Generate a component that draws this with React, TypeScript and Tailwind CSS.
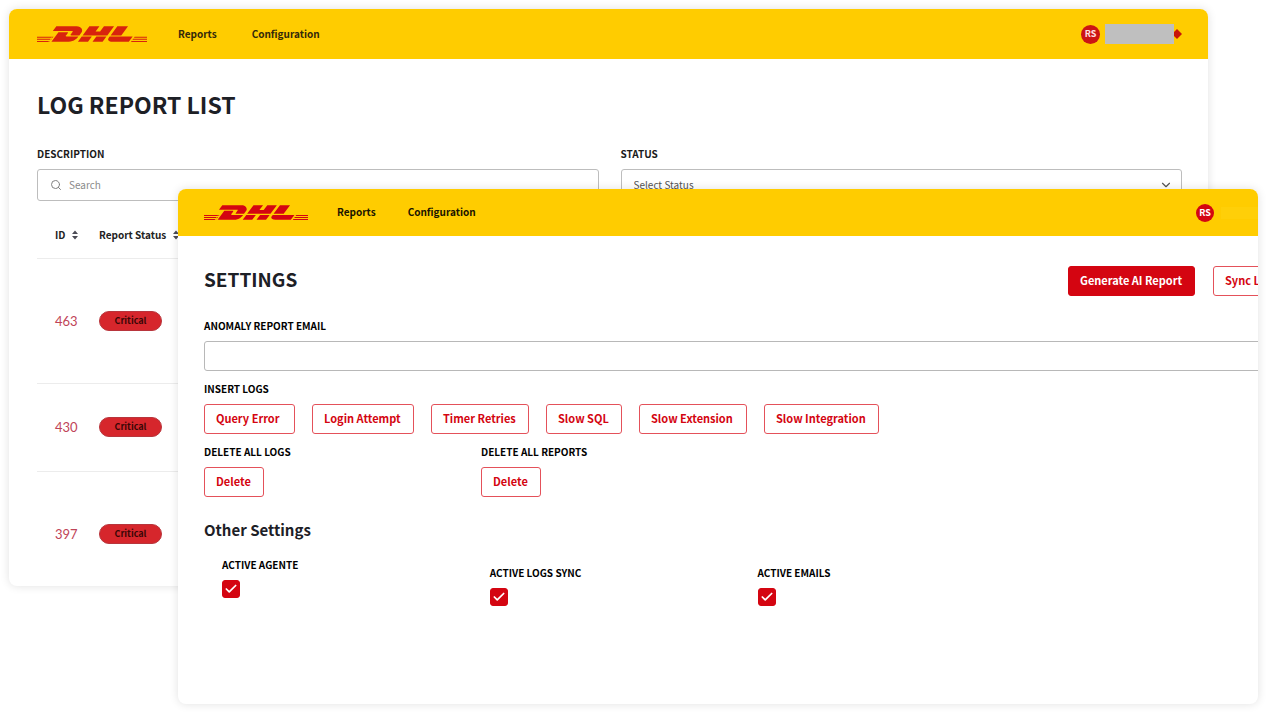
import { useState } from 'react';
import type { ReactNode } from 'react';
import { Check, ChevronDown, Search } from 'lucide-react';
import { SiDhl } from 'react-icons/si';

type ActionButtonProps = {
  children: ReactNode;
  filled?: boolean;
  className?: string;
};

type ToggleFieldProps = {
  id: string;
  label: string;
  className?: string;
};

const insertLogs = [
  { label: 'Query Error', width: 'w-[91px]' },
  { label: 'Login Attempt', width: 'w-[102px]' },
  { label: 'Timer Retries', width: 'w-[98px]' },
  { label: 'Slow SQL', width: 'w-[76px]' },
  { label: 'Slow Extension', width: 'w-[108px]' },
  { label: 'Slow Integration', width: 'w-[115px]' },
];

const reports = [
  { id: 463, status: 'Critical', height: 'h-[125px]' },
  { id: 430, status: 'Critical', height: 'h-[88px]' },
  { id: 397, status: 'Critical', height: 'h-[125px]' },
];

// the icon's own stripes vanish at this size, so heavier ones go over them
const Logo = ({ className }: { className: string }) => (
  <svg viewBox="0 0 104 15" className={className} role="img" aria-label="DHL">
    <SiDhl size={104} y={-44.5} />
    <path d="M0 9.5h15l-3.5 5.5H0zM104 9.5H92l-4 5.5h16z" fill="#ffcc00" />
    <path
      d="M0 10h14.2l-.7 1H0zM0 12h12.8l-.7 1H0zM0 14h11.4l-.7 1H0zM104 10H92.3l-.7 1H104zM104 12H90.9l-.7 1H104zM104 14H89.5l-.7 1H104z"
      fill="currentColor"
    />
  </svg>
);

const ActionButton = ({ children, filled, className }: ActionButtonProps) => (
  <button
    type="button"
    className={`h-[30px] shrink-0 rounded-[3px] border pb-[2px] pl-[11px] text-left text-[11px] leading-4 font-bold whitespace-nowrap ${
      filled
        ? 'border-[#d40511] bg-[#d40511] text-white'
        : 'border-[#e4515a] bg-white text-[#d40511]'
    } ${className ?? ''}`}
  >
    {children}
  </button>
);

const SortIcon = () => (
  <svg viewBox="0 0 8 10" className="h-[10px] w-2 shrink-0" fill="#4b4b55">
    <path d="M4 0.5 7 4H1zM4 9.5 1 6h6z" />
  </svg>
);

const ToggleField = ({ id, label, className }: ToggleFieldProps) => {
  const [checked, setChecked] = useState(true);

  return (
    <div className={className}>
      <label
        htmlFor={id}
        className="block text-[10px] leading-4 font-bold text-black"
      >
        {label}
      </label>
      <div className="mt-[7px] grid w-[18px]">
        <input
          id={id}
          type="checkbox"
          checked={checked}
          onChange={(e) => setChecked(e.target.checked)}
          className="col-start-1 row-start-1 size-[18px] appearance-none rounded-[3px] border border-[#d40511] checked:bg-[#d40511]"
        />
        {checked && (
          <Check
            className="pointer-events-none col-start-1 row-start-1 size-[14px] place-self-center text-white"
            strokeWidth={3}
          />
        )}
      </div>
    </div>
  );
};

const ReportListWindow = () => (
  <section className="col-start-1 row-start-1 mr-[50px] mb-[118px] h-0 min-h-[calc(100%-118px)] overflow-hidden rounded-lg bg-white shadow-[0_0_10px_rgba(0,0,0,0.12)]">
    <header className="flex h-[50px] items-center bg-[#ffcc00] pr-[26px] pl-7">
      <Logo className="h-4 w-[110px] text-[#d8230d]" />
      <nav className="ml-[31px] flex gap-[35px] text-[10px] leading-4 font-bold text-[#33290a]">
        <a href="#reports">Reports</a>
        <a href="#configuration">Configuration</a>
      </nav>
      <div className="ml-auto flex items-center">
        <span className="flex size-[19px] items-center justify-center rounded-full bg-[#cc1414] text-[9px] font-bold text-[#ffe0e0]">
          RS
        </span>
        <span className="ml-[5px] h-5 w-[69px] bg-[#bfbfbf]" />
        <svg viewBox="0 0 8 10" className="h-[10px] w-2" fill="#c81408">
          <path d="M3 0 8 5 3 10 0 7V3z" />
        </svg>
      </div>
    </header>

    <div className="pr-[26px] pl-7">
      <h1 className="mt-[30px] text-[23px] leading-[30px] font-bold text-[#1d2026]">
        LOG REPORT LIST
      </h1>
      <div className="mt-[27px] grid grid-cols-2 gap-[22px]">
        <div>
          <label
            htmlFor="description"
            className="block text-[10px] leading-4 font-bold text-[#1a1a1a]"
          >
            DESCRIPTION
          </label>
          <div className="mt-[7px] flex h-8 items-center gap-[7px] rounded-[3px] border border-[#bdbdbd] px-3">
            <Search className="size-3 text-[#808080]" strokeWidth={2} />
            <input
              id="description"
              type="text"
              placeholder="Search"
              className="min-w-0 flex-1 text-[10px] leading-4 outline-none placeholder:text-[#8a8a8a]"
            />
          </div>
        </div>
        <div>
          <label
            htmlFor="status"
            className="block text-[10px] leading-4 font-bold text-[#1a1a1a]"
          >
            STATUS
          </label>
          <div className="mt-[7px] grid">
            <select
              id="status"
              className="col-start-1 row-start-1 h-8 appearance-none rounded-[3px] border border-[#bdbdbd] bg-white px-3 text-[10px] leading-4 text-[#555555]"
            >
              <option>Select Status</option>
            </select>
            <ChevronDown className="pointer-events-none col-start-1 row-start-1 mr-[9px] size-[14px] self-center justify-self-end text-[#555555]" />
          </div>
        </div>
      </div>

      <table className="mt-3 w-full text-left">
        <thead>
          <tr className="h-[45px] border-b border-[#ececec] text-[10px] leading-4 text-[#222222]">
            <th scope="col" className="w-[62px] pl-[18px]">
              <span className="flex items-center gap-[6px]">
                ID <SortIcon />
              </span>
            </th>
            <th scope="col">
              <span className="flex items-center gap-[6px]">
                Report Status <SortIcon />
              </span>
            </th>
          </tr>
        </thead>
        <tbody>
          {reports.map((report) => (
            <tr key={report.id} className={`border-b border-[#ececec] ${report.height}`}>
              <td className="pl-[18px] font-[Lato] text-[13px] leading-4 text-[#bf4458]">
                {report.id}
              </td>
              <td>
                <span className="flex h-5 w-[63px] items-center justify-center rounded-full border border-[#b8353c] bg-[#d6262c] text-[9px] leading-4 font-bold text-[#3a0606]">
                  {report.status}
                </span>
              </td>
            </tr>
          ))}
        </tbody>
      </table>
    </div>
  </section>
);

const SettingsWindow = () => {
  const [email, setEmail] = useState('');

  return (
    <section className="z-10 col-start-1 row-start-1 mt-[180px] ml-[169px] overflow-hidden rounded-lg bg-white shadow-[0_0_10px_rgba(0,0,0,0.12)]">
      <header className="flex h-[47px] items-center bg-[#ffcc00] pl-[26px]">
        <Logo className="h-[15px] w-[104px] text-[#d40511]" />
        <nav className="ml-[29px] flex gap-8 pb-[2px] text-[10px] leading-4 font-bold text-[#1a1400]">
          <a href="#reports">Reports</a>
          <a href="#configuration">Configuration</a>
        </nav>
        <div className="ml-auto flex items-center gap-[7px]">
          <span className="flex size-[18px] items-center justify-center rounded-full bg-[#d40511] text-[9px] font-bold text-white">
            RS
          </span>
          <span className="h-3 w-[37px] bg-[#ffcf08]" />
        </div>
      </header>

      {/* wider than the window, so the right side runs out of view */}
      <div className="w-[calc(100%+35px)] pt-[30px] pb-[98px] pl-[26px]">
        <div className="flex h-[30px] items-start justify-between">
          <h1 className="text-[19px] leading-[26px] font-bold text-[#1d2026]">
            SETTINGS
          </h1>
          <div className="flex gap-[18px]">
            <ActionButton filled className="w-[127px]">
              Generate AI Report
            </ActionButton>
            <ActionButton className="w-20">Sync Logs</ActionButton>
          </div>
        </div>

        <div className="mt-[22px] flex flex-col gap-[10px] text-[10px] leading-4 font-bold text-black">
          <div>
            <label htmlFor="email" className="block">
              ANOMALY REPORT EMAIL
            </label>
            <input
              id="email"
              type="email"
              value={email}
              onChange={(e) => setEmail(e.target.value)}
              className="mt-[7px] block h-[30px] w-full rounded-[3px] border border-[#b8b8b8] px-3 font-normal"
            />
          </div>
          <div>
            <h2>INSERT LOGS</h2>
            <div className="mt-[7px] flex gap-[17px]">
              {insertLogs.map((log) => (
                <ActionButton key={log.label} className={log.width}>
                  {log.label}
                </ActionButton>
              ))}
            </div>
          </div>
          <div className="grid grid-cols-[277px_277px]">
            <div>
              <h2>DELETE ALL LOGS</h2>
              <ActionButton className="mt-[7px] w-[60px]">Delete</ActionButton>
            </div>
            <div>
              <h2>DELETE ALL REPORTS</h2>
              <ActionButton className="mt-[7px] w-[60px]">Delete</ActionButton>
            </div>
          </div>
        </div>

        <h2 className="mt-[21px] text-[15px] leading-6 font-bold text-[#1d2026]">
          Other Settings
        </h2>
        <div className="mt-[15px] grid grid-cols-4 pl-[18px]">
          <ToggleField id="active-agente" label="ACTIVE AGENTE" />
          <ToggleField id="active-logs-sync" label="ACTIVE LOGS SYNC" className="pt-2" />
          <ToggleField id="active-emails" label="ACTIVE EMAILS" className="pt-2" />
        </div>
      </div>
    </section>
  );
};

const App = () => (
  <main className="grid bg-white pt-[9px] pr-[10px] pb-[14px] pl-[9px] font-['Noto_Sans_CJK_JP',sans-serif]">
    <ReportListWindow />
    <SettingsWindow />
  </main>
);

export default App;
